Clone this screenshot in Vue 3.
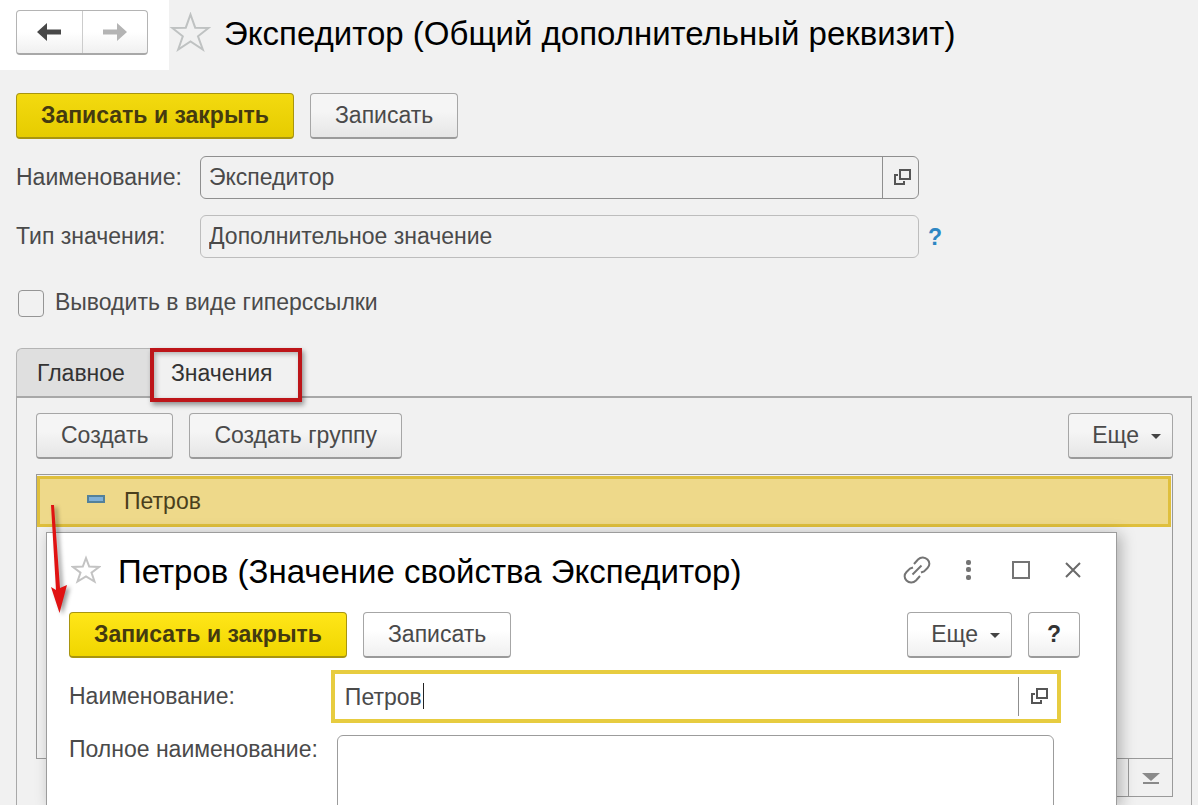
<script setup>
import { ref } from 'vue'

const name = ref('Экспедитор')
const valueType = ref('Дополнительное значение')
const asLink = ref(false)
const tabs = ['Главное', 'Значения']
const activeTab = ref('Значения')
const values = ref(['Петров'])
const dialogName = ref('Петров')
const fullName = ref('')
</script>

<template>
  <main class="page">
    <header class="head">
      <div class="nav-wrap">
        <div class="nav">
          <button type="button" aria-label="Назад">
            <svg width="26" height="20" viewBox="0 0 26 20"><path d="M1 10 11 1v6.500h14v5H11V19z" fill="#484848" /></svg>
          </button>
          <button type="button" aria-label="Вперед">
            <svg width="26" height="20" viewBox="0 0 26 20"><path d="M25 10 15 1v6.500H1v5h14V19z" fill="#b4b4b4" /></svg>
          </button>
        </div>
      </div>
      <button class="plain" type="button" aria-label="В избранное">
        <svg width="42" height="40" viewBox="0 0 42 40"><path d="M21.500 2.500 26.200 15.700 39.500 16 29 24.300 33.800 37.500 21.500 29.500 9.200 37.500 13.800 24.300 3.300 16 16.800 15.700z" fill="none" stroke="#bfc2c2" stroke-width="2" /></svg>
      </button>
      <h1>Экспедитор (Общий дополнительный реквизит)</h1>
    </header>

    <div class="commands">
      <button class="btn primary" type="button">Записать и закрыть</button>
      <button class="btn" type="button">Записать</button>
    </div>

    <div class="form">
      <div class="field">
        <label for="name">Наименование:</label>
        <div class="box">
          <input id="name" v-model="name" type="text" />
          <button class="open" type="button" aria-label="Открыть">
            <svg width="18" height="18" viewBox="0 0 18 18" fill="none" stroke="#555" stroke-width="2"><path d="M7 2h10v9H7z" /><path d="M5 7H2v9h9v-3" /></svg>
          </button>
        </div>
      </div>
      <div class="field">
        <label for="type">Тип значения:</label>
        <div class="box readonly">
          <input id="type" :value="valueType" type="text" readonly />
        </div>
        <button class="plain hint" type="button">?</button>
      </div>
    </div>

    <label class="check">
      <input v-model="asLink" type="checkbox" />
      <span>Выводить в виде гиперссылки</span>
    </label>

    <div class="tabs" role="tablist">
      <button
        v-for="tab in tabs"
        :key="tab"
        class="tab"
        :class="{ active: tab === activeTab }"
        type="button"
        role="tab"
        :aria-selected="tab === activeTab"
        @click="activeTab = tab"
      >{{ tab }}</button>
    </div>

    <section class="panel">
      <div class="toolbar">
        <button class="btn" type="button">Создать</button>
        <button class="btn" type="button">Создать группу</button>
        <button class="btn more" type="button">Еще <i class="caret"></i></button>
      </div>
      <div class="list">
        <ul>
          <li v-for="v in values" :key="v"><i class="dash"></i>{{ v }}</li>
        </ul>
      </div>
      <div class="pager">
        <button type="button" aria-label="Вниз">
          <svg width="20" height="14" viewBox="0 0 20 14"><path d="M1 1h18l-9 8z" fill="#8a8a8a" /></svg>
        </button>
        <button type="button" aria-label="В конец">
          <svg width="20" height="14" viewBox="0 0 20 14"><path d="M1 1h18l-9 8zM2 10h16v2H2z" fill="#8a8a8a" /></svg>
        </button>
      </div>
    </section>

    <section class="dialog" role="dialog" aria-labelledby="dialog-title">
      <header class="dialog-head">
        <button class="plain" type="button" aria-label="В избранное">
          <svg width="30" height="30" viewBox="0 0 30 30"><path d="M15 3 18.200 11.600 28 12 20.500 17.600 23.500 26.500 15 21.500 6.500 26.500 9.500 17.600 2 12 11.800 11.600z" fill="none" stroke="#c3c3c3" stroke-width="2" /></svg>
        </button>
        <h2 id="dialog-title">Петров (Значение свойства Экспедитор)</h2>
        <div class="window-tools">
          <button class="plain" type="button" aria-label="Ссылка">
            <svg width="28" height="28" viewBox="0 0 28 28" fill="none" stroke="#747474" stroke-width="2"><path d="M11 8l4-4.500c3-3 7-2.500 9.500 0s2.500 6 0 8.500L21 15.500l-3 1" /><path d="M17 20l-4 4.500c-3 3-7 2.500-9.500 0s-2.500-6 0-8.500L7 12.500l3-1" /><path d="M9.500 18.500l9-9" /></svg>
          </button>
          <button class="plain" type="button" aria-label="Меню">
            <svg width="28" height="28" viewBox="0 0 28 28" fill="#747474"><rect x="11" y="4" width="5" height="5" rx="2" /><rect x="11" y="11" width="5" height="5" rx="2" /><rect x="11" y="19" width="5" height="5" rx="2" /></svg>
          </button>
          <button class="plain" type="button" aria-label="Развернуть">
            <svg width="28" height="28" viewBox="0 0 28 28"><path d="M6 6h16v16H6z" fill="none" stroke="#747474" stroke-width="2" /></svg>
          </button>
          <button class="plain" type="button" aria-label="Закрыть">
            <svg width="28" height="28" viewBox="0 0 28 28"><path d="M7 7l14 14M21 7 7 21" fill="none" stroke="#6a6a6a" stroke-width="2" /></svg>
          </button>
        </div>
      </header>
      <div class="toolbar">
        <button class="btn primary" type="button">Записать и закрыть</button>
        <button class="btn" type="button">Записать</button>
        <button class="btn more" type="button">Еще <i class="caret"></i></button>
        <button class="btn help" type="button">?</button>
      </div>
      <div class="dialog-form">
        <label for="d-name">Наименование:</label>
        <div class="focus">
          <span class="typed"><input id="d-name" v-model="dialogName" type="text" /><i class="cursor"></i></span>
          <button class="open" type="button" aria-label="Открыть">
            <svg width="18" height="18" viewBox="0 0 18 18" fill="none" stroke="#555" stroke-width="2"><path d="M7 2h10v9H7z" /><path d="M5 7H2v9h9v-3" /></svg>
          </button>
        </div>
        <label for="d-full" class="top">Полное наименование:</label>
        <textarea id="d-full" v-model="fullName"></textarea>
      </div>
    </section>

    <svg class="arrow" width="30" height="120" viewBox="0 0 30 120" aria-hidden="true">
      <path d="M11 4h3l6 83 7-3-7.500 28L11 86l5 3z" fill="#e01212" />
    </svg>
  </main>
</template>

<style>
body {
  margin: 0;
  background: #f1f1f1;
}
</style>

<style scoped>
* {
  box-sizing: border-box;
}
.page {
  position: relative;
  display: flex;
  flex-direction: column;
  height: 100vh;
  overflow: hidden;
  background: #f1f1f1;
  color: #4a4a4a;
  font: 23px/28px "Liberation Sans", Arial, sans-serif;
}
button,
input,
textarea {
  font: inherit;
  color: inherit;
  margin: 0;
}
.plain {
  display: flex;
  padding: 0;
  border: 0;
  background: none;
}
.head {
  display: flex;
  align-items: center;
  height: 70px;
  flex: none;
}
.nav-wrap {
  background: #fff;
  height: 70px;
  width: 169px;
  padding: 10px 21px 0 16px;
}
.nav {
  display: flex;
  height: 45px;
  border: 1px solid #b4b4b4;
  border-bottom: 2px solid #a8a8a8;
  border-radius: 4px;
  background: linear-gradient(#fff 50%, #f0f0f0);
}
.nav button {
  flex: 1;
  display: flex;
  align-items: center;
  justify-content: center;
  padding: 0;
  border: 0;
  background: none;
}
.nav button + button {
  border-left: 1px solid #ccc;
}
.head .plain {
  margin-bottom: 6px;
}
h1,
h2 {
  margin: 0;
  color: #000;
  font-size: 33px;
  line-height: 40px;
  font-weight: 400;
  white-space: nowrap;
}
h1 {
  margin: 0 0 2px 13px;
}
.commands,
.toolbar {
  display: flex;
  gap: 16px;
}
.commands {
  padding: 23px 16px 17px;
}
.btn {
  height: 46px;
  padding: 0 24px 2px;
  border: 1px solid #a6a6a6;
  border-bottom: 2px solid #9a9a9a;
  border-radius: 4px;
  background: linear-gradient(#f5f5f5 40%, #e6e6e6);
  white-space: nowrap;
}
.btn.primary {
  border-color: #a89510;
  background: linear-gradient(#f3da10, #e6cc00);
  color: #443a10;
  font-weight: 700;
}
.more {
  display: flex;
  align-items: center;
  gap: 12px;
  margin-left: auto;
  padding: 0 11px 2px 23px;
}
.caret {
  margin-top: 4px;
  border: 5px solid transparent;
  border-top-color: #444;
  border-bottom: 0;
}
.form {
  display: grid;
  gap: 16px;
  padding: 0 16px;
}
.field {
  display: flex;
  align-items: center;
}
.field label {
  width: 184px;
  flex: none;
  padding-bottom: 2px;
}
.box {
  display: flex;
  flex: 1;
  max-width: 719px;
  height: 43px;
  border: 1px solid #8f8f8f;
  border-radius: 6px;
}
.box.readonly {
  border-color: #bdbdbd;
}
.box input,
.focus input {
  flex: 1;
  min-width: 0;
  padding: 0 8px 2px;
  border: 0;
  outline: 0;
  background: none;
}
.open {
  display: flex;
  align-items: center;
  justify-content: center;
  width: 36px;
  padding: 0 0 2px 2px;
  border: 0;
  border-left: 1px solid #8f8f8f;
  background: none;
}
.hint {
  margin-left: 9px;
  color: #2d86c3;
  font-weight: 700;
}
.check {
  display: flex;
  align-items: center;
  gap: 11px;
  margin: 28px 18px 27px;
  line-height: 32px;
}
.check input {
  appearance: none;
  width: 26px;
  height: 27px;
  border: 1px solid #959595;
  border-radius: 4px;
}
.check span {
  padding-bottom: 3px;
}
.tabs {
  display: flex;
  padding-left: 16px;
  flex: none;
}
.tab {
  height: 48px;
  padding: 0 25px 0 20px;
  border: 1px solid #b4b4b4;
  border-width: 1px 0 0 1px;
  border-radius: 6px 0 0 0;
  background: #dfdfdf;
  color: #333;
}
.tab.active {
  position: relative;
  z-index: 1;
  height: 54px;
  margin-bottom: -6px;
  padding: 0 25px 4px 17px;
  border: 4px solid #bd1519;
  border-radius: 0;
  background: #f1f1f1;
  box-shadow: 2px 3px 5px #0006, inset 2px 2px 5px #0004;
}
.panel {
  flex: 1;
  display: flex;
  flex-direction: column;
  margin: 0 6px 0 16px;
  padding: 15px 18px 8px 19px;
  border: 1px solid #a8a8a8;
  border-top-width: 2px;
  border-bottom: 0;
}
.list {
  flex: 1;
  margin-top: 15px;
  border: 1px solid #9a9a9a;
}
ul {
  margin: 0;
  padding: 1px 1px 0 0;
  list-style: none;
}
li {
  display: flex;
  align-items: center;
  height: 51px;
  padding: 0 0 2px 47px;
  border: 3px solid #dfbf3c;
  background: #eed98a;
  color: #4a3f1c;
}
.dash {
  width: 18px;
  height: 8px;
  margin: 0 19px 3px 0;
  border: 2px solid #53819a;
  background: #7fb0d8;
}
.pager {
  display: flex;
  justify-content: flex-end;
}
.pager button {
  display: flex;
  align-items: center;
  justify-content: center;
  width: 44px;
  height: 38px;
  padding: 2px 0 0;
  border: 1px solid #9a9a9a;
  border-top: 0;
  background: #f1f1f1;
}
.pager button + button {
  border-left: 0;
}
.dialog {
  position: absolute;
  top: 532px;
  right: 81px;
  bottom: 0;
  left: 46px;
  padding: 0 36px 0 22px;
  border: 1px solid #9c9c9c;
  border-bottom: 0;
  background: #fff;
  box-shadow: 4px 2px 14px #0004;
}
.dialog .btn {
  background: linear-gradient(#fff 40%, #f0f0f0);
}
.dialog .btn.primary {
  background: linear-gradient(#ffe619, #f0d600);
}
.dialog .help {
  margin: 0;
  padding: 0 18px 2px;
  color: #333;
  font-weight: 700;
}
.dialog-head {
  display: flex;
  align-items: center;
  height: 79px;
  padding-bottom: 2px;
}
.dialog-head > .plain {
  margin: 0 17px 4px 2px;
}
.window-tools {
  display: flex;
  gap: 24px;
  margin: 0 -7px 4px auto;
}
.dialog-form {
  display: grid;
  grid-template-columns: auto minmax(0, 1fr);
  column-gap: 13px;
  row-gap: 12px;
  margin: 12px 19px 0 0;
}
.dialog-form label {
  padding-top: 12px;
}
.dialog-form label.top {
  padding-top: 0;
}
.focus {
  display: flex;
  height: 53px;
  padding: 3px 0;
  border: 4px solid #e7cc40;
}
.focus .open {
  width: 39px;
}
.typed {
  position: relative;
  display: flex;
  flex: 1;
}
.focus input {
  padding: 0 10px;
}
.cursor {
  position: absolute;
  left: 88px;
  top: 6px;
  width: 1px;
  height: 26px;
  background: #222;
}
textarea {
  height: 120px;
  margin: 0 7px 0 6px;
  border: 1px solid #9c9c9c;
  border-radius: 6px;
  background: #fff;
  resize: none;
}
.arrow {
  position: absolute;
  top: 501px;
  left: 40px;
  filter: drop-shadow(3px 2px 2px #0006);
}
</style>
